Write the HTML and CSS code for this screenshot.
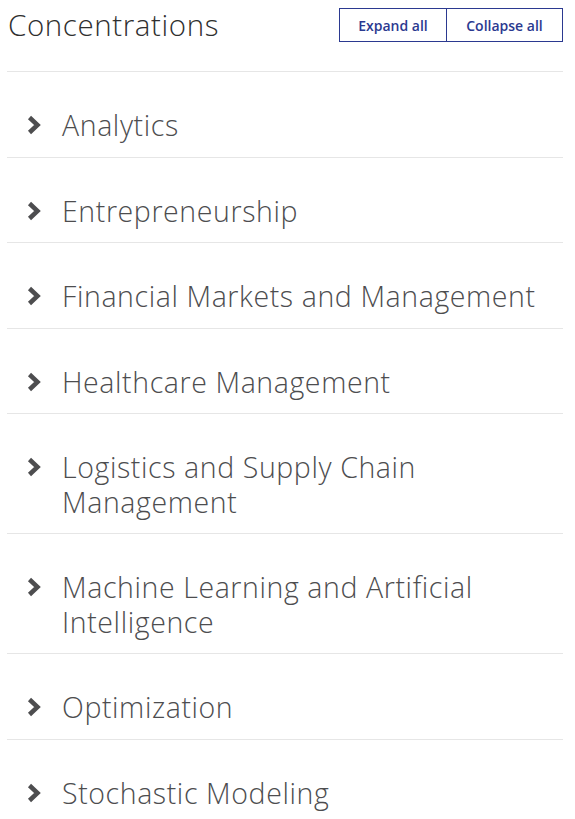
FILE: index.html
```html
<!DOCTYPE html>
<html lang="en">
<head>
  <meta charset="UTF-8" />
  <meta name="viewport" content="width=device-width, initial-scale=1.0"/>
  <title>Concentrations</title>
  <link rel="stylesheet" href="styles.css">
</head>
<body>
  <div class="container">
    <div class="header">
      <h2>Concentrations</h2>
      <div class="toggles">
        <button type="button" class="expand">Expand all</button>
        <button type="button" class="collapse">Collapse all</button>
      </div>
    </div>

    <ul class="accordion">
      <li><svg class="chev" viewBox="0 0 14 20"><polyline points="2.5,2.5 10.5,10 2.5,17.5"/></svg><span>Analytics</span></li>
      <li><svg class="chev" viewBox="0 0 14 20"><polyline points="2.5,2.5 10.5,10 2.5,17.5"/></svg><span>Entrepreneurship</span></li>
      <li><svg class="chev" viewBox="0 0 14 20"><polyline points="2.5,2.5 10.5,10 2.5,17.5"/></svg><span>Financial Markets and Management</span></li>
      <li><svg class="chev" viewBox="0 0 14 20"><polyline points="2.5,2.5 10.5,10 2.5,17.5"/></svg><span>Healthcare Management</span></li>
      <li><svg class="chev" viewBox="0 0 14 20"><polyline points="2.5,2.5 10.5,10 2.5,17.5"/></svg><span>Logistics and Supply Chain Management</span></li>
      <li><svg class="chev" viewBox="0 0 14 20"><polyline points="2.5,2.5 10.5,10 2.5,17.5"/></svg><span>Machine Learning and Artificial Intelligence</span></li>
      <li><svg class="chev" viewBox="0 0 14 20"><polyline points="2.5,2.5 10.5,10 2.5,17.5"/></svg><span>Optimization</span></li>
      <li><svg class="chev" viewBox="0 0 14 20"><polyline points="2.5,2.5 10.5,10 2.5,17.5"/></svg><span>Stochastic Modeling</span></li>
    </ul>
  </div>
</body>
</html>
```

FILE: styles.css
```css
body {
  margin: 0;
  padding: 0;
  background-color: #fff;
  color: #4d4d4f;
  font-family: 'Open Sans', sans-serif;
}

.container {
  margin: 0 12px 0 7px;
}

.header {
  display: flex;
  justify-content: space-between;
  align-items: flex-start;
  padding-top: 8px;
  height: 63px;
  border-bottom: 1px solid #e6e6e6;
}

h2 {
  margin: 0;
  padding-left: 1px;
  font-size: 29.5px;
  font-weight: 350;
  letter-spacing: 0.6px;
  line-height: 34px;
  color: #2f2f2f;
}

.toggles {
  display: flex;
}

.toggles button {
  height: 34px;
  padding: 0;
  background-color: #fff;
  border: 1px solid #2b3990;
  color: #2b3990;
  font-family: 'Open Sans', sans-serif;
  font-size: 14px;
  font-weight: 600;
  cursor: pointer;
}

.toggles .expand {
  width: 108px;
}

.toggles .collapse {
  width: 116px;
  border-left: none;
}

.accordion {
  list-style: none;
  margin: 0;
  padding: 0;
}

.accordion li {
  display: flex;
  align-items: flex-start;
  padding: 36px 20px 14px 20px;
  border-bottom: 1px solid #e6e6e6;
  font-size: 28.5px;
  font-weight: 350;
  letter-spacing: 0.6px;
  line-height: 34.5px;
}

.chev {
  flex: none;
  width: 14px;
  height: 20px;
  margin: 7px 21px 0 0;
}

.chev polyline {
  fill: none;
  stroke: #4d4d4f;
  stroke-width: 4.5;
}
```
